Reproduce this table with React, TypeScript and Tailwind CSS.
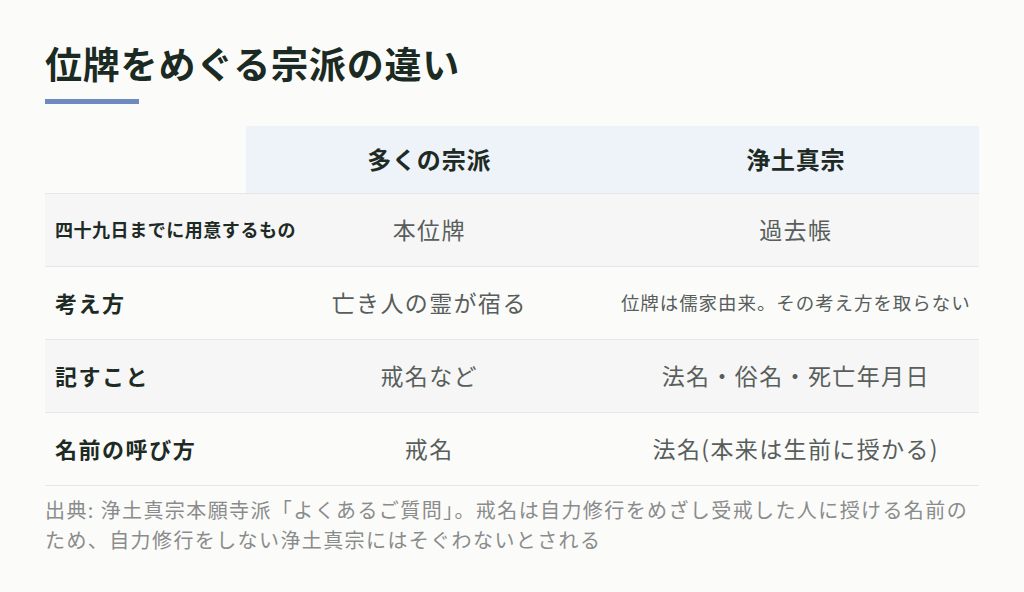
const ROWS = [
    { label: '四十九日までに用意するもの', small: true, a: '本位牌', b: '過去帳', bSmall: false },
    { label: '考え方', small: false, a: '亡き人の霊が宿る', b: '位牌は儒家由来。その考え方を取らない', bSmall: true },
    { label: '記すこと', small: false, a: '戒名など', b: '法名・俗名・死亡年月日', bSmall: false },
    { label: '名前の呼び方', small: false, a: '戒名', b: '法名(本来は生前に授かる)', bSmall: false },
];

const App: React.FC = () => {
    return (
        <div
            className="min-h-screen w-full bg-[#fbfbfa] px-[45px] pt-[36px] tracking-[0.05em]"
            style={{ fontFamily: '"Noto Sans CJK JP", "Noto Sans", sans-serif' }}
        >
            {/* Title */}
            <h1 className="text-[37px] font-bold leading-[55px] text-[#1b2a22]">位牌をめぐる宗派の違い</h1>
            <div className="mt-[8px] h-[5px] w-[94px] bg-[#6e8bbf]"></div>

            {/* Comparison table */}
            <table className="mt-[22px] w-full table-fixed border-collapse">
                <colgroup>
                    <col className="w-[201px]" />
                    <col />
                    <col />
                </colgroup>
                <thead>
                    <tr className="h-[67px] border-b border-[#e4e6e8]">
                        <th className="bg-transparent"></th>
                        <th className="bg-[#eef3fa] text-center text-[24px] font-bold text-[#1e2a24]">多くの宗派</th>
                        <th className="bg-[#eef3fa] text-center text-[24px] font-bold text-[#1e2a24]">浄土真宗</th>
                    </tr>
                </thead>
                <tbody>
                    {ROWS.map((row, i) => (
                        <tr
                            key={i}
                            className={`h-[73px] border-b border-[#e4e6e8] ${i % 2 === 0 ? 'bg-[#f6f6f6]' : 'bg-[#fbfbfa]'}`}
                        >
                            <td
                                className={`pl-[10px] font-bold text-[#1e2a24] whitespace-nowrap ${row.small ? 'text-[18px] tracking-[0.03em]' : 'text-[22px] tracking-[0.07em]'}`}
                            >
                                {row.label}
                            </td>
                            <td className="text-center text-[23px] text-[#585e5b] tracking-[0.06em]">{row.a}</td>
                            <td
                                className={`text-center text-[#585e5b] whitespace-nowrap ${row.bSmall ? 'text-[18.5px] tracking-[0.05em]' : 'text-[23px] tracking-[0.06em]'}`}
                            >
                                {row.b}
                            </td>
                        </tr>
                    ))}
                </tbody>
            </table>

            {/* Source note */}
            <p className="mt-[9px] text-[20px] leading-[30px] text-[#8a8c8b] tracking-[0.07em]">
                出典: 浄土真宗本願寺派「よくあるご質問」。戒名は自力修行をめざし受戒した人に授ける名前のため、自力修行をしない浄土真宗にはそぐわないとされる
            </p>
        </div>
    );
};

export default App;
